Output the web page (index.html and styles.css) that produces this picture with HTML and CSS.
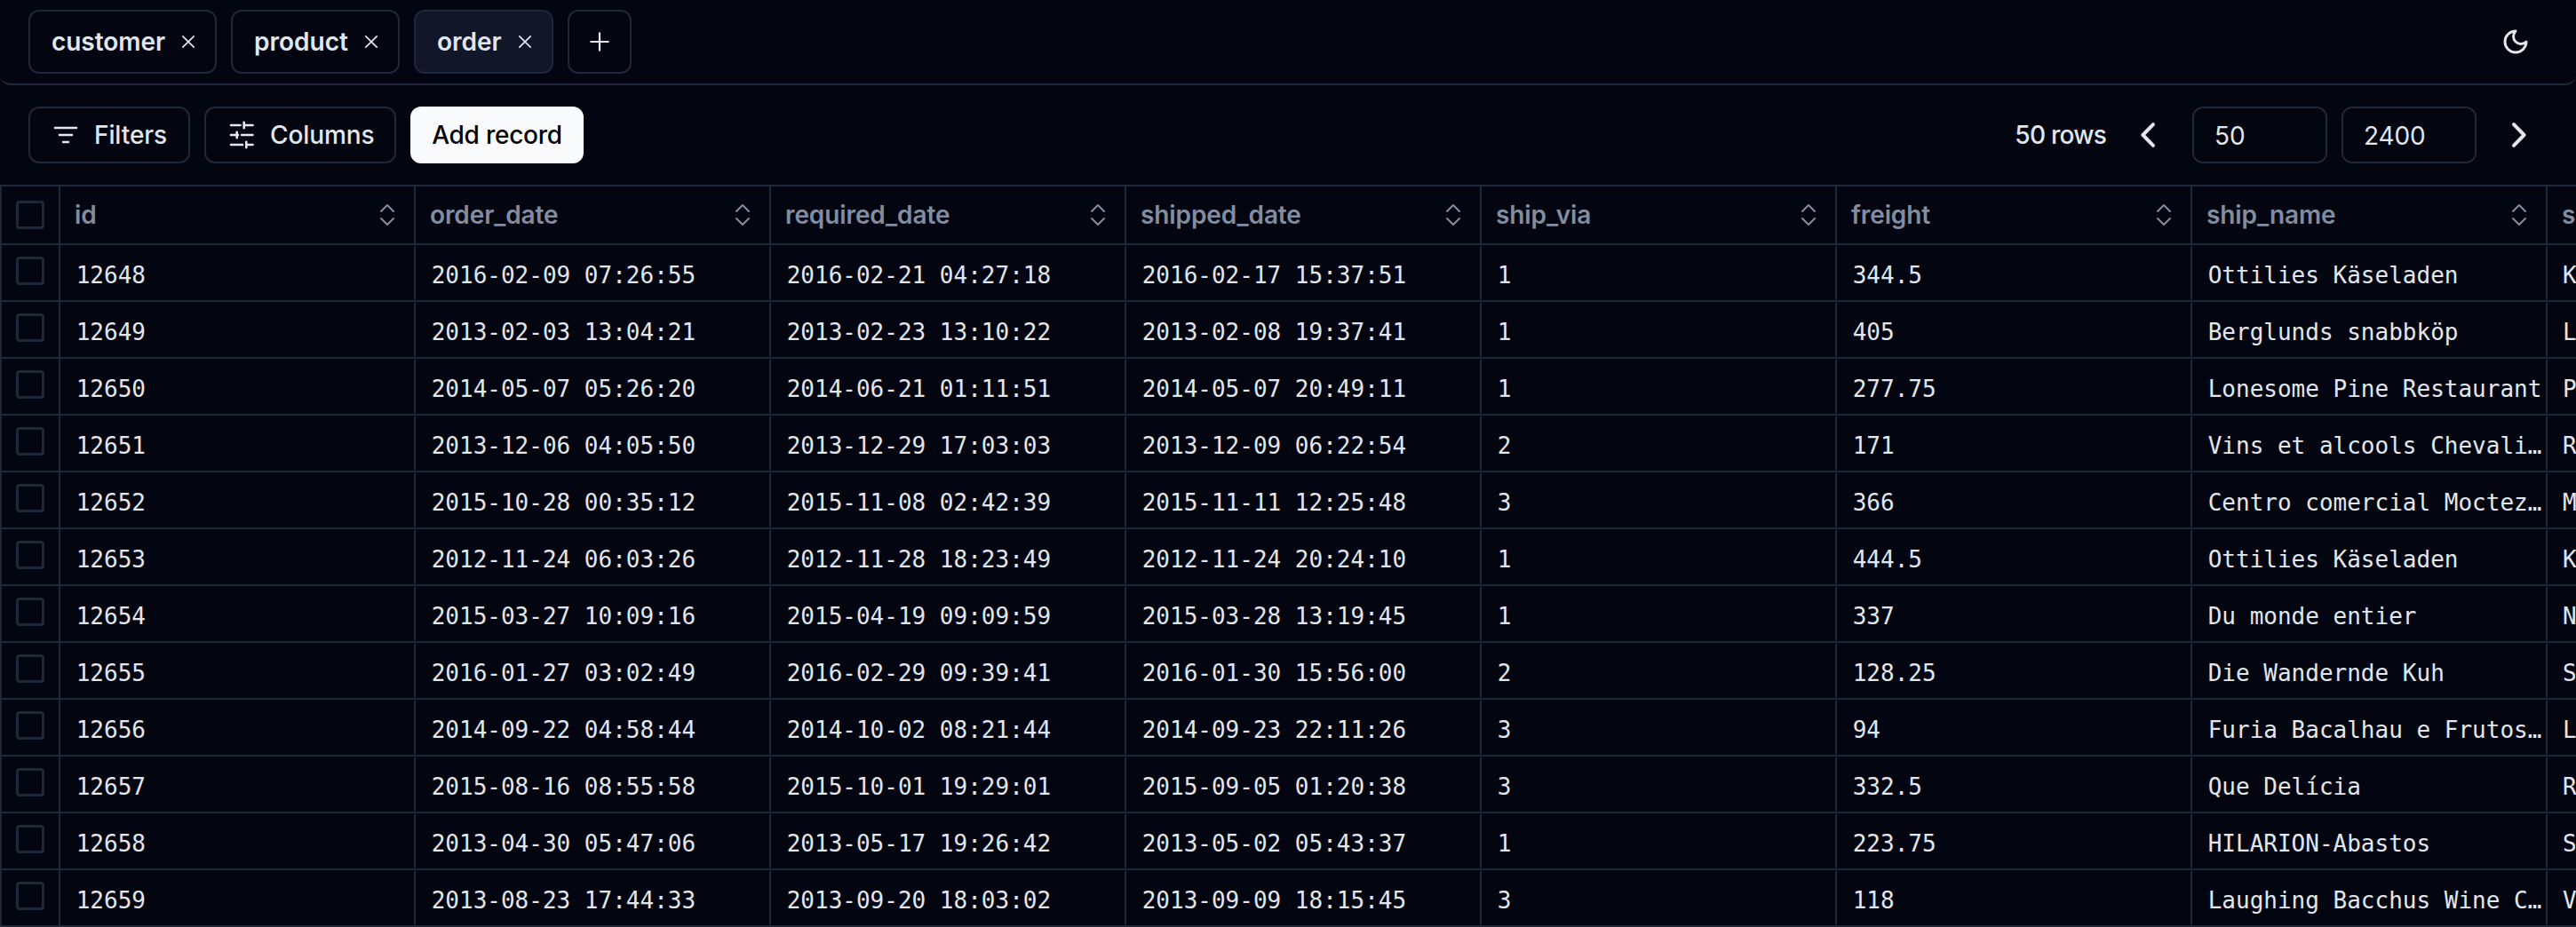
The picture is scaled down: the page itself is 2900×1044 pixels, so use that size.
FILE: index.html
```html
<!DOCTYPE html>
<html lang="en">
<head>
<meta charset="utf-8">
<title>order</title>
<link rel="stylesheet" href="styles.css">
</head>
<body>
<svg class="defs" aria-hidden="true">
  <symbol id="close" viewBox="0 0 28 28"><path d="M7.8 7.8l12.4 12.4M20.2 7.8L7.8 20.2"/></symbol>
  <symbol id="sort" viewBox="0 0 32 32"><path d="M9 12l7-7 7 7M9 20l7 7 7-7"/></symbol>
</svg>
<header class="tabs">
  <div class="tab tab-customer"><span>customer</span><svg class="close"><use href="#close"/></svg></div>
  <div class="tab tab-product"><span>product</span><svg class="close"><use href="#close"/></svg></div>
  <div class="tab tab-order active"><span>order</span><svg class="close"><use href="#close"/></svg></div>
  <button class="add-tab" aria-label="New tab"><svg class="plus" viewBox="0 0 32 32"><path d="M16 6.3v19.4M6.3 16h19.4"/></svg></button>
  <svg class="moon" viewBox="0 0 24 24"><path d="M12 3a6 6 0 0 0 9 9 9 9 0 1 1-9-9Z"/></svg>
</header>
<div class="toolbar">
  <button class="btn filters"><svg class="icon" viewBox="0 0 32 32"><path d="M4 8h24M9 16h14M13.2 24h5.6"/></svg>Filters</button>
  <button class="btn columns"><svg class="icon" viewBox="0 0 32 32"><path d="M4 5h10.5M18.7 5H28.5M18.7 1.8v6.4M4 16h8M10.7 12.8v6.4M16.2 16h12.3M4 27h13M21.3 27h7.2M21.3 23.8v6.4"/></svg>Columns</button>
  <button class="btn primary">Add record</button>
  <div class="pager">
    <span class="count">50 rows</span>
    <svg class="chev" viewBox="0 0 32 32"><path d="M22 4.2L10.4 16 22 27.8"/></svg>
    <div class="field">50</div>
    <div class="field">2400</div>
    <svg class="chev" viewBox="0 0 32 32"><path d="M10 4.2L21.6 16 10 27.8"/></svg>
  </div>
</div>
<main class="grid">
  <div class="row head">
    <div class="check"><i></i></div>
    <div class="cell">id<svg class="sort"><use href="#sort"/></svg></div>
    <div class="cell">order_date<svg class="sort"><use href="#sort"/></svg></div>
    <div class="cell">required_date<svg class="sort"><use href="#sort"/></svg></div>
    <div class="cell">shipped_date<svg class="sort"><use href="#sort"/></svg></div>
    <div class="cell">ship_via<svg class="sort"><use href="#sort"/></svg></div>
    <div class="cell">freight<svg class="sort"><use href="#sort"/></svg></div>
    <div class="cell">ship_name<svg class="sort"><use href="#sort"/></svg></div>
    <div class="cell">s</div>
  </div>
  <div class="row"><div class="check"><i></i></div><div class="cell">12648</div><div class="cell">2016-02-09 07:26:55</div><div class="cell">2016-02-21 04:27:18</div><div class="cell">2016-02-17 15:37:51</div><div class="cell">1</div><div class="cell">344.5</div><div class="cell">Ottilies Käseladen</div><div class="cell">K</div></div>
  <div class="row"><div class="check"><i></i></div><div class="cell">12649</div><div class="cell">2013-02-03 13:04:21</div><div class="cell">2013-02-23 13:10:22</div><div class="cell">2013-02-08 19:37:41</div><div class="cell">1</div><div class="cell">405</div><div class="cell">Berglunds snabbköp</div><div class="cell">L</div></div>
  <div class="row"><div class="check"><i></i></div><div class="cell">12650</div><div class="cell">2014-05-07 05:26:20</div><div class="cell">2014-06-21 01:11:51</div><div class="cell">2014-05-07 20:49:11</div><div class="cell">1</div><div class="cell">277.75</div><div class="cell">Lonesome Pine Restaurant</div><div class="cell">P</div></div>
  <div class="row"><div class="check"><i></i></div><div class="cell">12651</div><div class="cell">2013-12-06 04:05:50</div><div class="cell">2013-12-29 17:03:03</div><div class="cell">2013-12-09 06:22:54</div><div class="cell">2</div><div class="cell">171</div><div class="cell">Vins et alcools Chevali…</div><div class="cell">R</div></div>
  <div class="row"><div class="check"><i></i></div><div class="cell">12652</div><div class="cell">2015-10-28 00:35:12</div><div class="cell">2015-11-08 02:42:39</div><div class="cell">2015-11-11 12:25:48</div><div class="cell">3</div><div class="cell">366</div><div class="cell">Centro comercial Moctez…</div><div class="cell">M</div></div>
  <div class="row"><div class="check"><i></i></div><div class="cell">12653</div><div class="cell">2012-11-24 06:03:26</div><div class="cell">2012-11-28 18:23:49</div><div class="cell">2012-11-24 20:24:10</div><div class="cell">1</div><div class="cell">444.5</div><div class="cell">Ottilies Käseladen</div><div class="cell">K</div></div>
  <div class="row"><div class="check"><i></i></div><div class="cell">12654</div><div class="cell">2015-03-27 10:09:16</div><div class="cell">2015-04-19 09:09:59</div><div class="cell">2015-03-28 13:19:45</div><div class="cell">1</div><div class="cell">337</div><div class="cell">Du monde entier</div><div class="cell">N</div></div>
  <div class="row"><div class="check"><i></i></div><div class="cell">12655</div><div class="cell">2016-01-27 03:02:49</div><div class="cell">2016-02-29 09:39:41</div><div class="cell">2016-01-30 15:56:00</div><div class="cell">2</div><div class="cell">128.25</div><div class="cell">Die Wandernde Kuh</div><div class="cell">S</div></div>
  <div class="row"><div class="check"><i></i></div><div class="cell">12656</div><div class="cell">2014-09-22 04:58:44</div><div class="cell">2014-10-02 08:21:44</div><div class="cell">2014-09-23 22:11:26</div><div class="cell">3</div><div class="cell">94</div><div class="cell">Furia Bacalhau e Frutos…</div><div class="cell">L</div></div>
  <div class="row"><div class="check"><i></i></div><div class="cell">12657</div><div class="cell">2015-08-16 08:55:58</div><div class="cell">2015-10-01 19:29:01</div><div class="cell">2015-09-05 01:20:38</div><div class="cell">3</div><div class="cell">332.5</div><div class="cell">Que Delícia</div><div class="cell">R</div></div>
  <div class="row"><div class="check"><i></i></div><div class="cell">12658</div><div class="cell">2013-04-30 05:47:06</div><div class="cell">2013-05-17 19:26:42</div><div class="cell">2013-05-02 05:43:37</div><div class="cell">1</div><div class="cell">223.75</div><div class="cell">HILARION-Abastos</div><div class="cell">S</div></div>
  <div class="row"><div class="check"><i></i></div><div class="cell">12659</div><div class="cell">2013-08-23 17:44:33</div><div class="cell">2013-09-20 18:03:02</div><div class="cell">2013-09-09 18:15:45</div><div class="cell">3</div><div class="cell">118</div><div class="cell">Laughing Bacchus Wine C…</div><div class="cell">V</div></div>
</main>
</body>
</html>
```

FILE: styles.css
```css
:root {
  --bg: #030610;
  --fg: #e2e6ee;
  --muted: #828da1;
  --line: #1f2838;
  --accent: #111628;
}
* { box-sizing: border-box; }
body {
  margin: 0;
  height: 1044px;
  overflow: hidden;
  background: var(--bg);
  color: var(--fg);
  font: 500 28px/40px Inter, sans-serif;
}
svg { flex: none; fill: none; stroke: currentColor; stroke-linecap: round; stroke-linejoin: round; }
.defs { display: none; }
button { font: inherit; color: inherit; background: none; padding: 0; }

.tabs {
  display: flex;
  align-items: center;
  gap: 16px;
  height: 96px;
  padding: 0 52px 0 32px;
  border-bottom: 2px solid var(--line);
  border-radius: 12px;
}
.tab, .add-tab {
  display: flex;
  align-items: center;
  justify-content: space-between;
  height: 72px;
  padding: 0 16px 0 24px;
  border: 2px solid var(--line);
  border-radius: 12px;
  font-weight: 600;
  white-space: nowrap;
}
.tab-customer { width: 212px; letter-spacing: -.05px; }
.tab-product { width: 190px; }
.tab-order { width: 157px; }
.tab.active { background: var(--accent); }
.close { width: 28px; height: 28px; stroke-width: 1.7; }
.add-tab { width: 72px; padding: 0; justify-content: center; }
.plus { width: 32px; height: 32px; stroke-width: 2.2; }
.moon { width: 32px; height: 32px; margin-left: auto; stroke-width: 2.2; }

.toolbar {
  display: flex;
  align-items: center;
  gap: 16px;
  height: 112px;
  padding: 0 48px 0 32px;
}
.btn {
  display: flex;
  align-items: center;
  height: 64px;
  padding-left: 24px;
  border: 2px solid var(--line);
  border-radius: 12px;
  letter-spacing: -.1px;
  white-space: nowrap;
}
.filters { width: 182px; }
.columns { width: 216px; }
.primary {
  width: 195px;
  padding: 0;
  justify-content: center;
  border-color: #f8fafc;
  background: #f8fafc;
  color: #020205;
  letter-spacing: -.25px;
}
.icon { width: 32px; height: 32px; margin-right: 16px; stroke-width: 2.6; }
.pager { display: flex; align-items: center; margin-left: auto; }
.count { margin-right: 31px; letter-spacing: -.75px; }
.chev { width: 32px; height: 32px; stroke-width: 4; }
.field {
  width: 152px;
  height: 64px;
  padding: 11px 0 0 23px;
  margin-left: 16px;
  border: 2px solid var(--line);
  border-radius: 12px;
  font-weight: 400;
  letter-spacing: -.1px;
}
.chev + .field { margin-left: 34px; }
.field + .chev { margin-left: 32px; }

.grid { border-left: 2px solid var(--line); border-top: 2px solid var(--line); }
.row {
  display: grid;
  grid-template-columns: 66px repeat(7, 400px) minmax(0, 1fr);
  height: 64px;
  border-bottom: 2px solid var(--line);
  font: 400 26px/30px "DejaVu Sans Mono", monospace;
}
.cell {
  overflow: hidden;
  padding: 18px 0 0 15.7px;
  border: 0 solid transparent;
  border-width: 1px 2px 1px 0;
  border-right-color: var(--line);
  white-space: nowrap;
}
/* data text sits a little further in than the header labels */
.row:not(.head) .cell { padding-left: 17.7px; }
.row:not(.head) .cell:last-child { padding-left: 17px; letter-spacing: -.7px; }
.row .cell:last-child { border-right: 0; }
.check { padding: 13px 0 0 16px; border-right: 2px solid var(--line); }
.check i {
  display: block;
  width: 32px;
  height: 32px;
  border: 3.5px solid var(--line);
  border-radius: 4px;
}
.head { height: 66px; font: 600 28px/40px Inter, sans-serif; color: var(--muted); letter-spacing: -.1px; }
.head .check { padding-top: 16px; }
.head .cell {
  display: flex;
  align-items: center;
  justify-content: space-between;
  padding: 0 14px 0 16px;
  border: 0;
  border-right: 2px solid var(--line);
}
.head .cell:last-child { padding-right: 0; }
.sort { width: 32px; height: 32px; stroke-width: 2; }
```
